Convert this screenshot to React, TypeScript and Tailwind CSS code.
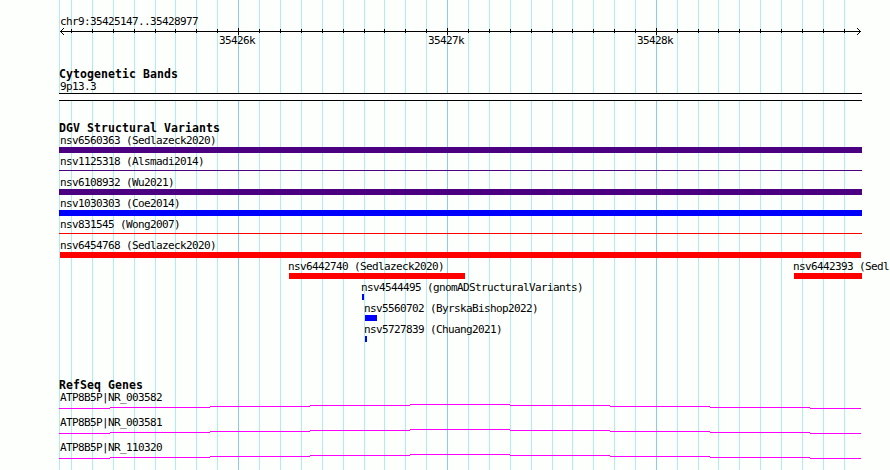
import clsx from 'clsx';

// x positions of the grid, 100 bases apart
const MINOR = [
  59, 71, 92, 113, 134, 155, 175, 196, 217, 259, 280, 301, 322, 343, 364, 384, 405, 426, 468,
  489, 510, 531, 552, 572, 593, 614, 635, 677, 698, 718, 739, 760, 781, 802, 823, 844,
];
const MAJOR = [238, 447, 656];

type Feature = {
  label: string;
  pos: string;
  size: string;
  color: string;
  thin?: boolean;
};

const FULL = 'ml-[-1px] w-[803px]';

const variants: Feature[][] = [
  [{ label: 'nsv6560363 (Sedlazeck2020)', pos: 'ml-[60px]', size: FULL, color: 'bg-[#4b0082]' }],
  [{ label: 'nsv1125318 (Alsmadi2014)', pos: 'ml-[60px]', size: FULL, color: 'bg-[#4b0082]', thin: true }],
  [{ label: 'nsv6108932 (Wu2021)', pos: 'ml-[60px]', size: FULL, color: 'bg-[#4b0082]' }],
  [{ label: 'nsv1030303 (Coe2014)', pos: 'ml-[60px]', size: FULL, color: 'bg-[#0000ff]' }],
  [{ label: 'nsv831545 (Wong2007)', pos: 'ml-[60px]', size: FULL, color: 'bg-[#ff0000]', thin: true }],
  [{ label: 'nsv6454768 (Sedlazeck2020)', pos: 'ml-[60px]', size: 'w-[801px]', color: 'bg-[#ff0000]' }],
  [
    { label: 'nsv6442740 (Sedlazeck2020)', pos: 'ml-[288px] w-[505px]', size: 'ml-px w-[176px]', color: 'bg-[#ff0000]' },
    { label: 'nsv6442393 (Sedl', pos: '', size: 'ml-px w-[68px]', color: 'bg-[#ff0000]' },
  ],
  [{ label: 'nsv4544495 (gnomADStructuralVariants)', pos: 'ml-[361px]', size: 'ml-px w-[2px]', color: 'bg-[#0000ff]' }],
  [{ label: 'nsv5560702 (ByrskaBishop2022)', pos: 'ml-[364px]', size: 'ml-px w-[12px]', color: 'bg-[#0000ff]' }],
  [{ label: 'nsv5727839 (Chuang2021)', pos: 'ml-[364px]', size: 'ml-px w-[2px]', color: 'bg-[#0000ff]' }],
];

const genes = ['ATP8B5P|NR_003582', 'ATP8B5P|NR_003581', 'ATP8B5P|NR_110320'];

function GridLines() {
  return (
    <svg width="890" height="470" shapeRendering="crispEdges" className="absolute inset-0">
      {MINOR.map((x) => (
        <rect key={x} x={x} y={0} width={1} height={470} fill="#afeeee" />
      ))}
      {MAJOR.map((x) => (
        <rect key={x} x={x} y={0} width={1} height={470} fill="#87ceeb" />
      ))}
    </svg>
  );
}

function Ruler() {
  return (
    <svg width="890" height="7" shapeRendering="crispEdges" className="block">
      <rect x={60} y={3} width={801} height={1} />
      {MINOR.slice(1).map((x) => (
        <rect key={x} x={x} y={1} width={1} height={4} />
      ))}
      {MAJOR.map((x) => (
        <rect key={x} x={x} y={0} width={1} height={7} />
      ))}
      {/* Arrow heads */}
      {[1, 2, 3].map((d) => (
        <g key={d}>
          <rect x={60 + d} y={3 - d} width={1} height={1} />
          <rect x={60 + d} y={3 + d} width={1} height={1} />
          <rect x={860 - d} y={3 - d} width={1} height={1} />
          <rect x={860 - d} y={3 + d} width={1} height={1} />
        </g>
      ))}
    </svg>
  );
}

function Title({ children }: { children: string }) {
  return (
    <h2 className="ml-[59px] h-[13px] text-[11.5px] leading-[13px] font-bold tracking-[0.077px]">{children}</h2>
  );
}

function Label({ children }: { children: string }) {
  return <div className="h-[13px]">{children}</div>;
}

// Intron line, drawn as a very flat staircase
function Intron() {
  return (
    <svg width="890" height="5" shapeRendering="crispEdges" className="block" fill="#ff00ff">
      <rect x={59} y={4} width={51} height={1} />
      {[3, 2, 1, 0, 1, 2, 3].map((y, i) => (
        <rect key={i} x={110 + i * 100} y={y} width={100} height={1} />
      ))}
      <rect x={810} y={4} width={51} height={1} />
    </svg>
  );
}

export default function App() {
  return (
    <div className="relative h-[470px] w-[890px] overflow-hidden bg-[#fdfffc] font-['DejaVu_Sans_Mono',monospace] text-[11px] leading-[13px] tracking-[-0.622px] whitespace-pre text-black">
      <GridLines />
      <div className="relative flex flex-col">
        {/* Scale */}
        <div className="pt-[15px] pl-[60px]">
          <Label>chr9:35425147..35428977</Label>
        </div>
        <Ruler />
        <div className="-mt-px flex h-[13px] pl-[219px]">
          <span className="w-[209px]">35426k</span>
          <span className="w-[209px]">35427k</span>
          <span>35428k</span>
        </div>

        {/* Cytogenetic bands */}
        <section className="pt-[21px]">
          <Title>Cytogenetic Bands</Title>
          <div className="-mt-px pl-[60px]">
            <Label>9p13.3</Label>
          </div>
          <div className="ml-[59px] h-2 w-[803px] border-y border-black bg-white" />
        </section>

        {/* Structural variants */}
        <section className="pt-[21px]">
          <Title>DGV Structural Variants</Title>
          <div className="-mt-px">
            {variants.map((row, i) => (
              <div key={i} className="flex h-[21px]">
                {row.map((f) => (
                  <div key={f.label} className={clsx('shrink-0', f.pos)}>
                    <Label>{f.label}</Label>
                    <div className={clsx(f.size, f.color, f.thin ? 'mt-[2px] h-px' : 'h-1.5')} />
                  </div>
                ))}
              </div>
            ))}
          </div>
        </section>

        {/* Genes */}
        <section className="pt-[35px]">
          <Title>RefSeq Genes</Title>
          <div className="-mt-px">
            {genes.map((gene) => (
              <div key={gene} className="h-[25px]">
                <div className="pl-[60px]">
                  <Label>{gene}</Label>
                </div>
                <Intron />
              </div>
            ))}
          </div>
        </section>
      </div>
    </div>
  );
}
